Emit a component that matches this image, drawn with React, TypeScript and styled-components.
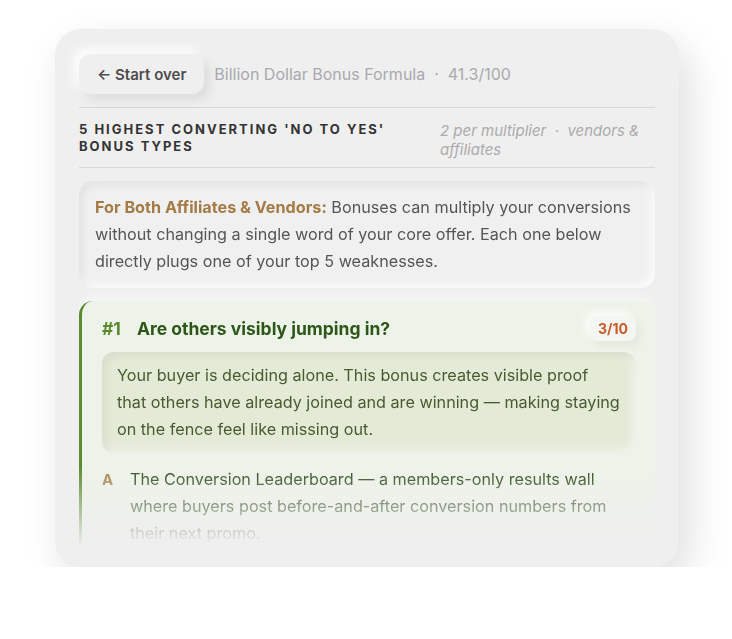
import React from 'react';
import styled, { createGlobalStyle } from 'styled-components';

const GlobalStyle = createGlobalStyle`
  html, body {
    margin: 0;
    padding: 0;
    background: #ffffff;
    font-family: Inter, "Noto Sans", sans-serif;
  }
`;

const Page = styled.div`
  padding: 29px 0 0 55px;
`;

const Card = styled.div`
  width: 624px;
  height: 538px;
  box-sizing: border-box;
  padding: 25px 24px 21px;
  background: #efefef;
  border-radius: 26px;
  box-shadow: 10px 16px 40px rgba(0, 0, 0, 0.13), -6px -6px 20px rgba(255, 255, 255, 0.9);
  display: flex;
  flex-direction: column;
`;

const Header = styled.div`
  display: flex;
  align-items: center;
  gap: 10px;
  padding-bottom: 13px;
  border-bottom: 1px solid #d9d9d9;
`;

const BackButton = styled.button`
  height: 40px;
  padding: 0 18px;
  border: none;
  border-radius: 12px;
  background: #efefef;
  font-family: inherit;
  font-size: 15px;
  font-weight: 600;
  color: #4d4d4d;
  box-shadow: 5px 5px 12px rgba(0, 0, 0, 0.09), -5px -5px 12px #ffffff;
  cursor: pointer;
`;

const Crumb = styled.span`
  font-size: 16px;
  color: #a9a9ad;
`;

const TitleRow = styled.div`
  display: flex;
  justify-content: space-between;
  gap: 20px;
  padding: 13px 0 8px;
  border-bottom: 1px solid #d9d9d9;
`;

const Title = styled.h1`
  margin: 0;
  font-size: 13px;
  line-height: 17px;
  font-weight: 700;
  letter-spacing: 2px;
  color: #333333;
  text-transform: uppercase;
  flex: 1;
`;

const Meta = styled.div`
  width: 215px;
  flex-shrink: 0;
  font-size: 15px;
  line-height: 19px;
  font-style: italic;
  color: #ababab;
`;

const Scroll = styled.div`
  flex: 1;
  overflow: hidden;
  margin-top: 13px;
  display: flex;
  flex-direction: column;
  gap: 13px;
  -webkit-mask-image: linear-gradient(to bottom, #000 78%, transparent 100%);
  mask-image: linear-gradient(to bottom, #000 78%, transparent 100%);
`;

const Callout = styled.div`
  padding: 13px 16px 13px;
  border-radius: 14px;
  background: #f0f0f0;
  box-shadow: inset 3px 3px 8px rgba(0, 0, 0, 0.07), inset -3px -3px 8px #ffffff;
  font-size: 16.2px;
  line-height: 27px;
  color: #555555;
`;

const Lead = styled.strong`
  color: #a47a45;
  font-weight: 700;
`;

const Bonus = styled.div`
  flex-shrink: 0;
  background: #edf3e8;
  border-left: 3px solid #5b8a30;
  border-radius: 14px;
  padding: 15px 19px 20px 20px;
  box-shadow: 0 0 18px rgba(255, 255, 255, 0.7);
`;

const BonusHead = styled.div`
  display: flex;
  align-items: center;
  gap: 16px;
`;

const Rank = styled.span`
  font-size: 17.5px;
  font-weight: 700;
  color: #5b8a30;
`;

const Question = styled.h2`
  margin: 0;
  flex: 1;
  font-size: 17.5px;
  font-weight: 700;
  color: #2d5619;
`;

const Score = styled.span`
  font-size: 14px;
  font-weight: 700;
  color: #c85a2c;
  padding: 4px 8px;
  border-radius: 8px;
  background: #f4f6f1;
  box-shadow: 4px 4px 10px rgba(0, 0, 0, 0.05), -4px -4px 10px rgba(255, 255, 255, 0.9);
`;

const Quote = styled.div`
  margin-top: 11px;
  padding: 10px 15px 10px;
  border-radius: 12px;
  background: #e3ebd7;
  box-shadow: inset 3px 3px 8px rgba(0, 0, 0, 0.07), inset -3px -3px 8px rgba(255, 255, 255, 0.6);
  font-size: 16.2px;
  line-height: 27px;
  color: #4a5a30;
`;

const Option = styled.div`
  display: flex;
  gap: 14px;
  margin-top: 13px;
  font-size: 16.2px;
  line-height: 27px;
`;

const Letter = styled.span`
  width: 14px;
  flex-shrink: 0;
  font-size: 15px;
  font-weight: 700;
  color: #a8834f;
`;

const OptionText = styled.span`
  color: #2d4a1c;
`;

export default function App() {
  return (
    <>
      <GlobalStyle />
      <Page>
        <Card>
          <Header>
            <BackButton>← Start over</BackButton>
            <Crumb>Billion Dollar Bonus Formula &nbsp;·&nbsp; 41.3/100</Crumb>
          </Header>
          <TitleRow>
            <Title>5 Highest Converting 'No to Yes' Bonus Types</Title>
            <Meta>2 per multiplier &nbsp;·&nbsp; vendors &amp; affiliates</Meta>
          </TitleRow>
          <Scroll>
            <Callout>
              <Lead>For Both Affiliates &amp; Vendors:</Lead> Bonuses can multiply your conversions
              without changing a single word of your core offer. Each one below directly plugs one
              of your top 5 weaknesses.
            </Callout>
            <Bonus>
              <BonusHead>
                <Rank>#1</Rank>
                <Question>Are others visibly jumping in?</Question>
                <Score>3/10</Score>
              </BonusHead>
              <Quote>
                Your buyer is deciding alone. This bonus creates visible proof that others have
                already joined and are winning — making staying on the fence feel like missing out.
              </Quote>
              <Option>
                <Letter>A</Letter>
                <OptionText>
                  The Conversion Leaderboard — a members-only results wall where buyers post
                  before-and-after conversion numbers from their next promo.
                </OptionText>
              </Option>
            </Bonus>
          </Scroll>
        </Card>
      </Page>
    </>
  );
}
